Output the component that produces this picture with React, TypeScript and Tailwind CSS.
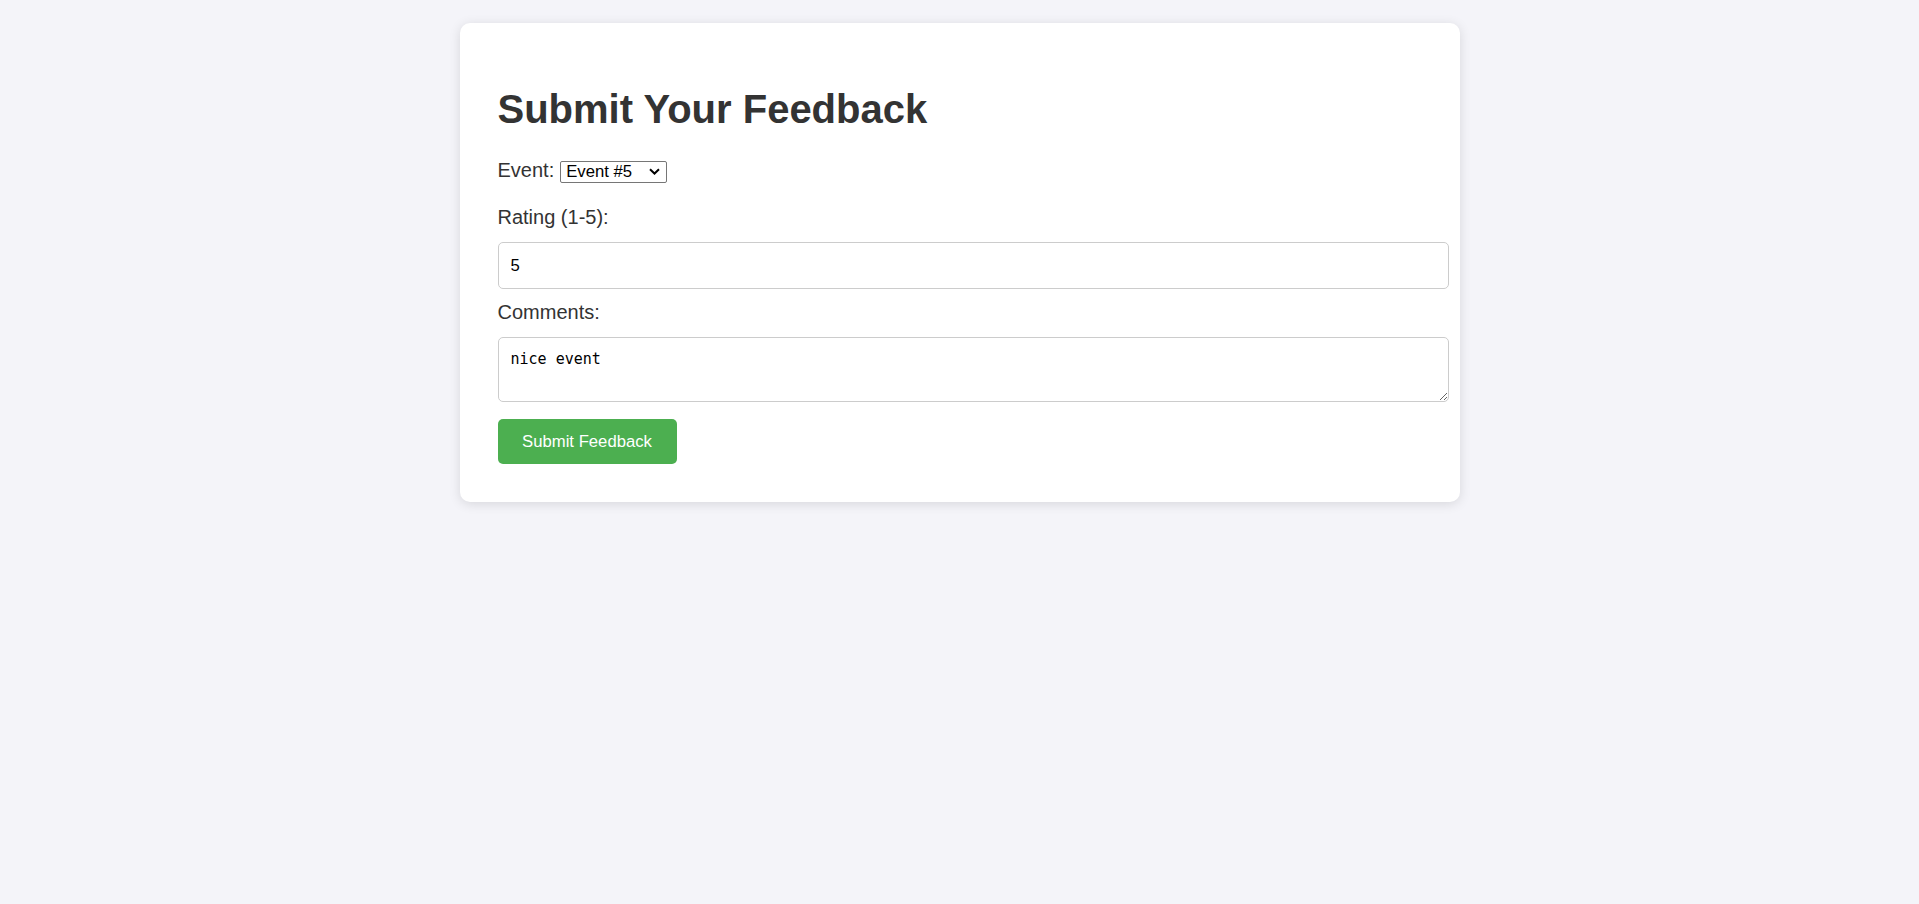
import { useState } from "react";

const events = ["Event #1", "Event #2", "Event #3", "Event #4", "Event #5"];

export default function App() {
  const [eventId, setEventId] = useState("Event #5");
  const [rating, setRating] = useState("5");
  const [comments, setComments] = useState("nice event");

  return (
    <div className="min-h-screen bg-[#f4f4f9] pt-[23px] font-['Liberation_Sans',Arial,sans-serif] text-[#333]">
      <div className="mx-auto w-[1000px] rounded-[10px] bg-white px-[38px] pt-[38px] pb-[38px] shadow-[0_2px_12px_rgba(0,0,0,0.12)]">
        <h1 className="mt-[25px] text-[40px] font-bold leading-[46px] text-[#333]">
          Submit Your Feedback
        </h1>

        <form onSubmit={(e) => e.preventDefault()}>
          {/* Event picker */}
          <div className="mt-[27px] flex items-baseline gap-[6px]">
            <label className="text-[20px] leading-[23px]">Event:</label>
            <div className="relative inline-block">
              <select
                value={eventId}
                onChange={(e) => setEventId(e.target.value)}
                className="h-[22px] w-[107px] appearance-none rounded-[2px] border border-[#767676] bg-white pl-[5px] text-[16.7px] leading-[20px] text-black"
              >
                {events.map((ev) => (
                  <option key={ev}>{ev}</option>
                ))}
              </select>
              <svg
                className="pointer-events-none absolute right-[7px] top-[8px]"
                width="11"
                height="7"
                viewBox="0 0 11 7"
                fill="none"
              >
                <path d="M1 1.2 L5.5 5.5 L10 1.2" stroke="#000" strokeWidth="2" />
              </svg>
            </div>
          </div>

          <label className="mt-[22px] block text-[20px] leading-[23px]">Rating (1-5):</label>
          <input
            type="number"
            min={1}
            max={5}
            value={rating}
            onChange={(e) => setRating(e.target.value)}
            className="mt-[13px] block h-[47px] w-[951px] max-w-none rounded-[5px] border border-[#ccc] px-[12px] text-[16.7px] text-black outline-none [appearance:textfield] [&::-webkit-inner-spin-button]:appearance-none"
          />

          <label className="mt-[12px] block text-[20px] leading-[23px]">Comments:</label>
          <textarea
            value={comments}
            onChange={(e) => setComments(e.target.value)}
            className="mt-[13px] block h-[65px] w-[951px] max-w-none rounded-[5px] border border-[#ccc] px-[12px] pt-[12px] font-['DejaVu_Sans_Mono',monospace] text-[15px] leading-[19px] text-black outline-none"
          />

          <button
            type="submit"
            className="mt-[17px] flex h-[45px] w-[179px] items-center justify-center rounded-[5px] bg-[#4CAF50] text-[16.7px] text-white"
          >
            Submit Feedback
          </button>
        </form>
      </div>
    </div>
  );
}
